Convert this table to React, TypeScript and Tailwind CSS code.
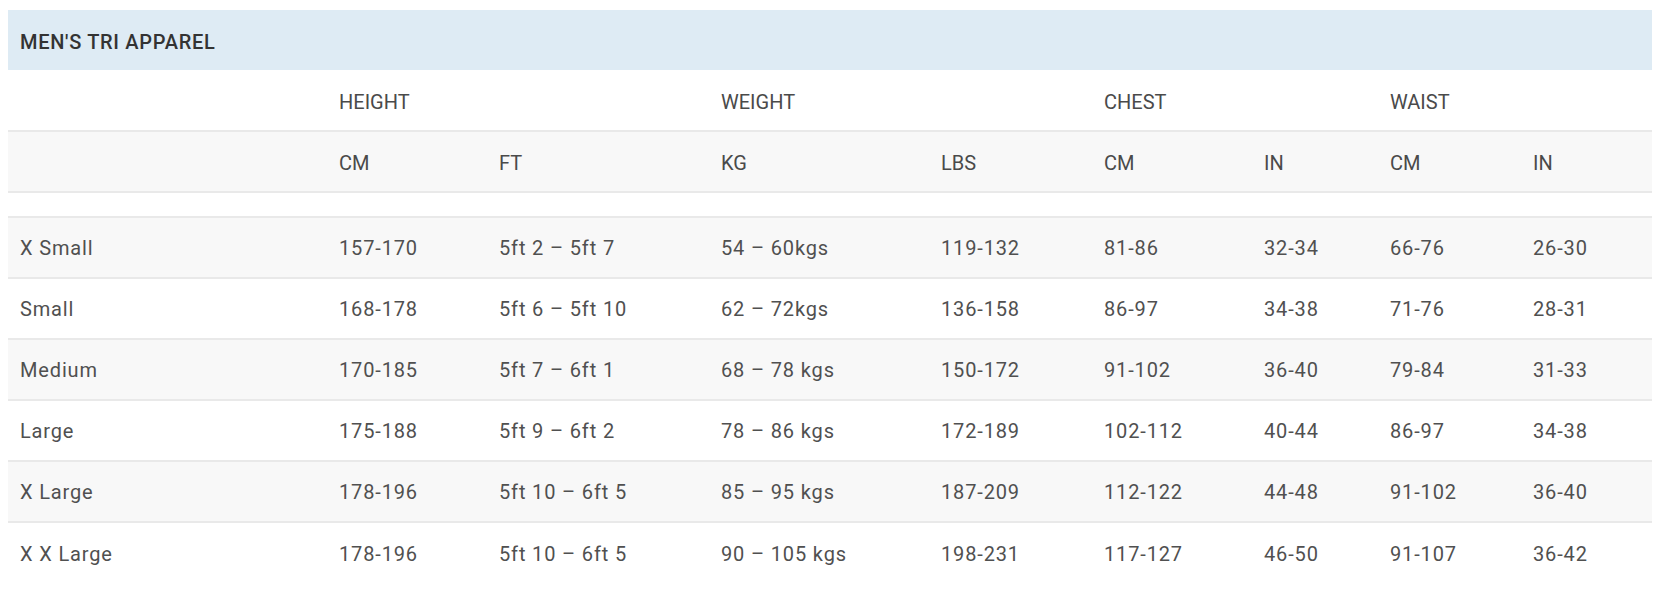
import React from "react";

const cols =
  "grid grid-cols-[319px_160px_222px_220px_163px_160px_126px_143px_131px]";

const rows: string[][] = [
  ["X Small", "157-170", "5ft 2 – 5ft 7", "54 – 60kgs", "119-132", "81-86", "32-34", "66-76", "26-30"],
  ["Small", "168-178", "5ft 6 – 5ft 10", "62 – 72kgs", "136-158", "86-97", "34-38", "71-76", "28-31"],
  ["Medium", "170-185", "5ft 7 – 6ft 1", "68 – 78 kgs", "150-172", "91-102", "36-40", "79-84", "31-33"],
  ["Large", "175-188", "5ft 9 – 6ft 2", "78 – 86 kgs", "172-189", "102-112", "40-44", "86-97", "34-38"],
  ["X Large", "178-196", "5ft 10 – 6ft 5", "85 – 95 kgs", "187-209", "112-122", "44-48", "91-102", "36-40"],
  ["X X Large", "178-196", "5ft 10 – 6ft 5", "90 – 105 kgs", "198-231", "117-127", "46-50", "91-107", "36-42"],
];

export default function App() {
  return (
    <div className="w-[1660px] h-[592px] bg-white overflow-hidden font-['Roboto',sans-serif]">
      <div className="ml-[8px] mt-[10px] w-[1644px]">
        <div className="h-[60px] bg-[#deebf4] flex items-center pl-[12px] pt-[3px] text-[20px] font-medium text-[#333] tracking-[0.7px]">
          MEN'S TRI APPAREL
        </div>
        <div className={`${cols} h-[62px] pt-[4px] border-b-2 border-[#e9e9e9] bg-white items-center text-[20px] text-[#4a4a4a]`}>
          <div />
          <div className="pl-[12px] col-span-2">HEIGHT</div>
          <div className="pl-[12px] col-span-2">WEIGHT</div>
          <div className="pl-[12px] col-span-2">CHEST</div>
          <div className="pl-[12px] col-span-2">WAIST</div>
        </div>
        <div className={`${cols} h-[61px] pt-[2px] border-b-2 border-[#e9e9e9] bg-[#f8f8f8] items-center text-[20px] text-[#4a4a4a]`}>
          <div />
          {["CM", "FT", "KG", "LBS", "CM", "IN", "CM", "IN"].map((t, i) => (
            <div key={i} className="pl-[12px]">
              {t}
            </div>
          ))}
        </div>
        <div className="h-[25px] border-b-2 border-[#e9e9e9] bg-white" />
        {rows.map((r, ri) => (
          <div
            key={ri}
            className={`${cols} h-[61px] items-center text-[20px] text-[#505050] tracking-[0.85px] ${
              ri < rows.length - 1 ? "border-b-2 border-[#e9e9e9]" : ""
            } ${ri % 2 === 0 ? "bg-[#f8f8f8]" : "bg-white"}`}
          >
            {r.map((c, ci) => (
              <div key={ci} className="pl-[12px] whitespace-nowrap">
                {c}
              </div>
            ))}
          </div>
        ))}
      </div>
    </div>
  );
}
